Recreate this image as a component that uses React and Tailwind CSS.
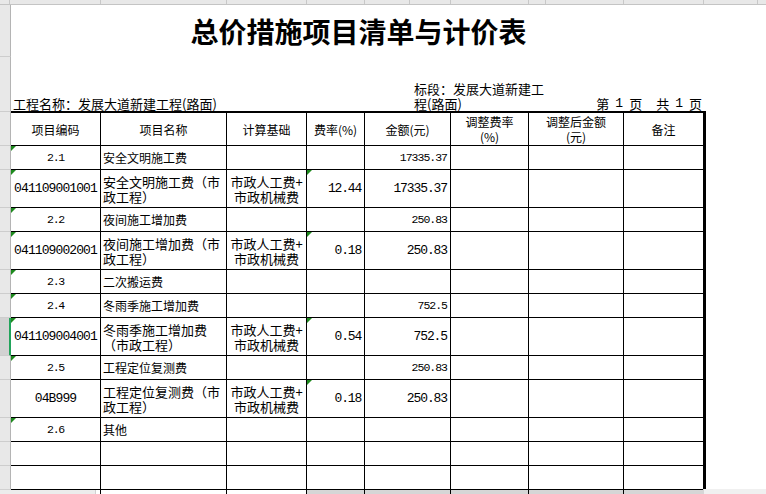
import React from "react";

const cjk = "font-['Noto_Sans_CJK_SC',sans-serif]";
const mono = "font-['Liberation_Mono','Noto_Sans_CJK_SC',monospace]";

const colW = ["w-[90px]", "w-[126px]", "w-[80px]", "w-[58px]", "w-[86px]", "w-[78px]", "w-[95px]", "w-[79px]"];

const topCols = ["w-[10px]", "w-[91px]", "w-[126px]", "w-[80px]", "w-[58px]", "w-[45px]", "w-[41px]", "w-[78px]", "w-[17px]", "w-[78px]", "w-[80px]", "w-[54px]"];

const sideRows = [
  { h: "h-[52px]" },
  { h: "h-[55px]" },
  { h: "h-[34px]" },
  { h: "h-[24px]" },
  { h: "h-[38px]" },
  { h: "h-[24px]" },
  { h: "h-[38px]" },
  { h: "h-[24px]" },
  { h: "h-[24px]" },
  { h: "h-[38px]", active: true },
  { h: "h-[24px]" },
  { h: "h-[38px]" },
  { h: "h-[24px]" },
  { h: "h-[24px]" },
  { h: "h-[30px]" },
];

const rows = [
  { code: "2.1", name: ["安全文明施工费"], amt: "17335.37", codeMark: true },
  { code: "041109001001", name: ["安全文明施工费（市", "政工程）"], basis: true, rate: "12.44", amt: "17335.37", tall: true, codeMark: true, rateMark: true },
  { code: "2.2", name: ["夜间施工增加费"], amt: "250.83", codeMark: true },
  { code: "041109002001", name: ["夜间施工增加费（市", "政工程）"], basis: true, rate: "0.18", amt: "250.83", tall: true, codeMark: true, rateMark: true },
  { code: "2.3", name: ["二次搬运费"], codeMark: true },
  { code: "2.4", name: ["冬雨季施工增加费"], amt: "752.5", codeMark: true },
  { code: "041109004001", name: ["冬雨季施工增加费", "（市政工程）"], basis: true, rate: "0.54", amt: "752.5", tall: true, codeMark: true, rateMark: true },
  { code: "2.5", name: ["工程定位复测费"], amt: "250.83", codeMark: true },
  { code: "04B999", name: ["工程定位复测费（市", "政工程）"], basis: true, rate: "0.18", amt: "250.83", tall: true, rateMark: true },
  { code: "2.6", name: ["其他"], codeMark: true },
  { name: [] },
  { name: [] },
  { name: [] },
];

function Mark() {
  return (
    <span className="absolute top-0 left-0 w-0 h-0 border-t-[5px] border-t-[#1e8a1e] border-r-[5px] border-r-transparent" />
  );
}

function Cell({ i, className = "", children, mark }) {
  return (
    <div className={`relative shrink-0 h-full flex items-center border-r border-b border-black ${colW[i]} ${i === 7 ? "border-r-0" : ""} ${className}`}>
      {mark && <Mark />}
      {children}
    </div>
  );
}

function HeaderRow() {
  const heads = [["项目编码"], ["项目名称"], ["计算基础"], ["费率(%)"], ["金额(元)"], ["调整费率", "(%)"], ["调整后金额", "(元)"], ["备注"]];
  return (
    <div className="flex h-[33px] text-[12px] leading-[15px]">
      {heads.map((h, i) => (
        <Cell key={i} i={i} className="justify-center text-center">
          <div>
            {h.map((t, k) => (
              <div key={k}>{t}</div>
            ))}
          </div>
        </Cell>
      ))}
    </div>
  );
}

function DataRow({ r }) {
  const tall = r.tall;
  const num = tall ? "text-[13px] tracking-[-1.1px]" : "text-[11.5px] tracking-[-1px]";
  return (
    <div className={`flex ${tall ? "h-[38px]" : "h-[24px]"}`}>
      <Cell i={0} mark={r.codeMark} className={`justify-center ${mono} ${tall ? "text-[13px] tracking-[-0.9px]" : "text-[11.5px] tracking-[-1.2px]"}`}>
        {r.code}
      </Cell>
      <Cell i={1} className={`pl-[2px] ${tall ? "text-[13px] leading-[15px]" : "text-[12px]"}`}>
        <div>
          {r.name.map((t, k) => (
            <div key={k}>{t}</div>
          ))}
        </div>
      </Cell>
      <Cell i={2} className="justify-center text-center text-[13px] leading-[15px]">
        {r.basis && (
          <div>
            <div>市政人工费+</div>
            <div>市政机械费</div>
          </div>
        )}
      </Cell>
      <Cell i={3} mark={r.rateMark} className={`justify-end pr-[3px] ${mono} text-[13px] tracking-[-1.2px]`}>
        {r.rate}
      </Cell>
      <Cell i={4} className={`justify-end pr-[3px] ${mono} ${num}`}>
        {r.amt}
      </Cell>
      <Cell i={5} />
      <Cell i={6} />
      <Cell i={7} />
    </div>
  );
}

export default function App() {
  return (
    <div className={`w-[766px] h-[494px] overflow-hidden bg-white text-black flex flex-col ${cjk}`}>
      {/* column header strip */}
      <div className="h-[5px] shrink-0 bg-[#e8e8e8] border-b border-[#c4c4c4] flex">
        {topCols.map((w, i) => (
          <div key={i} className={`${w} shrink-0 h-full border-r border-[#c8c8c8]`} />
        ))}
      </div>

      <div className="flex flex-1 min-h-0">
        {/* row header strip */}
        <div className="w-[11px] shrink-0 flex flex-col bg-[#e8e8e8]">
          {sideRows.map((s, i) => (
            <div
              key={i}
              className={`${s.h} shrink-0 border-b border-[#cdcdcd] ${s.active ? "bg-[#d2d2d2] border-r-2 border-r-[#21a35a]" : "border-r border-r-[#b4b4b4]"}`}
            />
          ))}
        </div>

        {/* sheet */}
        <div className="w-[695px] shrink-0 flex flex-col">
          <div className="h-[52px] shrink-0 flex items-center justify-center text-[28px] font-bold leading-none">
            总价措施项目清单与计价表
          </div>

          <div className="h-[54px] shrink-0 flex items-end text-[13px] leading-[15px]">
            <div className="w-[403px] pl-[2px]">工程名称：发展大道新建工程(路面)</div>
            <div className="w-[150px]">
              <div>标段：发展大道新建工</div>
              <div>程(路面)</div>
            </div>
            <div className="flex-1 flex justify-end items-end pr-[4px]">
              <span>第</span>
              <span className={`ml-[6px] ${mono}`}>1</span>
              <span className="ml-[6px]">页</span>
              <span className="ml-[14px]">共</span>
              <span className={`ml-[6px] ${mono}`}>1</span>
              <span className="ml-[6px]">页</span>
            </div>
          </div>

          <div className="border-t-2 border-r-[3px] border-black">
            <HeaderRow />
            {rows.map((r, i) => (
              <DataRow key={i} r={r} />
            ))}
          </div>
        </div>
      </div>

      {/* bottom bar */}
      <div className="h-[5px] shrink-0 flex">
        <div className="w-[96px] bg-[#ececec] border-t border-r border-[#d0d0d0]" />
        <div className="w-[211px] bg-white" />
        <div className="w-[397px] bg-[#d6d6d6]" />
        <div className="flex-1 bg-[#f0f0f0]" />
      </div>
    </div>
  );
}
